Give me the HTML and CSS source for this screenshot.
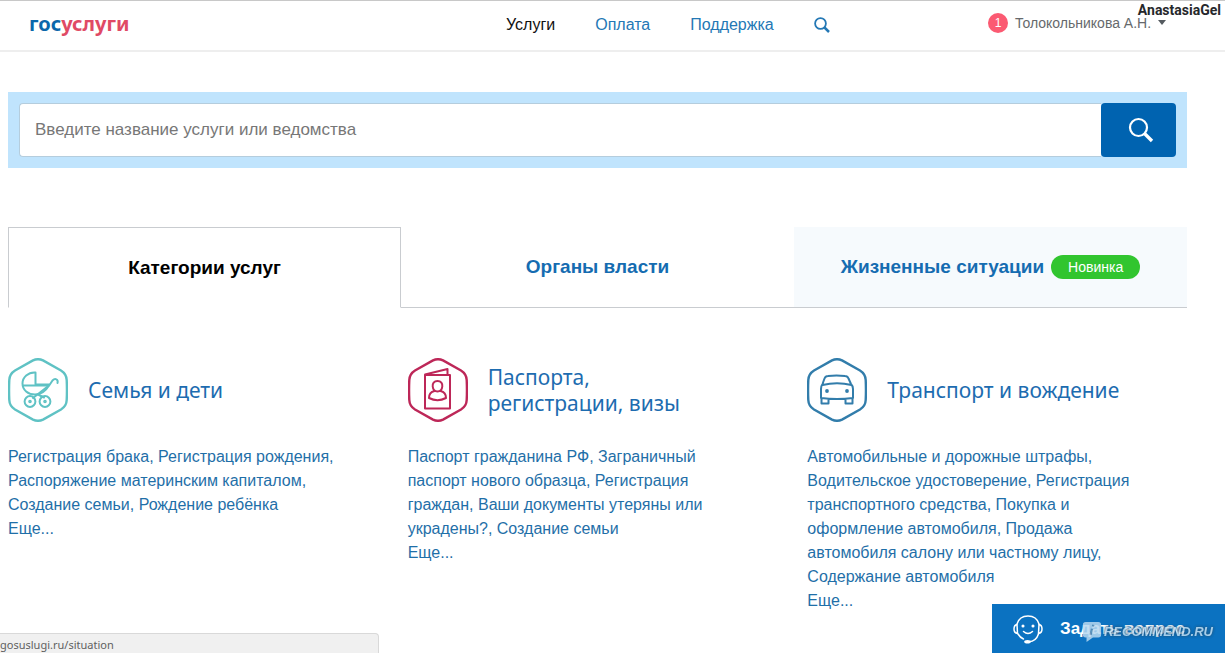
FILE: index.html
```html
<!DOCTYPE html>
<html lang="ru">
<head>
<meta charset="utf-8">
<meta name="viewport" content="width=device-width, initial-scale=1">
<title>Госуслуги</title>
<link rel="stylesheet" href="styles.css">
</head>
<body>
<header class="header">
  <a class="logo" href="#"><span class="logo-blue">гос</span><span class="logo-red">услуги</span></a>
  <nav class="nav">
    <a class="nav-link nav-link-active" href="#">Услуги</a>
    <a class="nav-link" href="#">Оплата</a>
    <a class="nav-link" href="#">Поддержка</a>
    <a class="nav-link nav-search" href="#" aria-label="Поиск">
      <svg width="16" height="16" viewBox="0 0 16 16" fill="none" stroke="currentColor"><circle cx="6.500" cy="6.500" r="5.400" stroke-width="1.800"/><path d="M10.500 10.500L15 15" stroke-width="2.500"/></svg>
    </a>
  </nav>
  <div class="user">
    <span class="count">1</span>
    <button class="user-name" type="button">Толокольникова А.Н.
      <svg width="8" height="5" viewBox="0 0 8 5"><path d="M0 0H8L4 5Z" fill="#555b60"/></svg>
    </button>
  </div>
</header>
<span class="author">AnastasiaGel</span>

<main class="main">
  <form class="search">
    <input class="search-input" type="text" aria-label="Поиск услуги" placeholder="Введите название услуги или ведомства">
    <button class="search-button" type="button" aria-label="Найти">
      <svg width="26" height="26" viewBox="0 0 26 26" fill="none" stroke="#fff"><circle cx="10.500" cy="10.500" r="8.500" stroke-width="2.200"/><path d="M16.500 16.500L24 24" stroke-width="3.400"/></svg>
    </button>
  </form>

  <nav class="tabs">
    <a class="tab tab-active" href="#">Категории услуг</a>
    <a class="tab" href="#">Органы власти</a>
    <a class="tab tab-tinted" href="#">Жизненные ситуации <span class="badge">Новинка</span></a>
  </nav>

  <div class="categories">
    <section class="category">
      <div class="category-head">
        <svg class="icon icon-teal" width="60" height="64" viewBox="0 0 60 64">
          <path class="hex" d="M25 2.400Q30 0 35 2.400L53 12.500Q58.500 16 58.700 22Q59.200 32 58.700 42Q58.500 48 53 51.500L35 61.600Q30 64 25 61.600L7 51.500Q1.500 48 1.300 42Q.8 32 1.300 22Q1.500 16 7 12.500Z"/>
          <path d="M27.500 26V14.500C20 14 14.500 19.500 14.500 25.500C14.500 32 20 36.500 27 36.500C33.500 36.500 38 32.500 41 27.500H15M27.500 26.500H41"/>
          <path d="M25 40L41.500 27L44.500 22.500C47 20 50.500 21 49.500 25M30 36.500L36 39.500"/>
          <circle cx="22" cy="43.500" r="5.400"/><circle cx="37" cy="43.500" r="5.400"/>
          <circle cx="22" cy="43.500" r=".8"/><circle cx="37" cy="43.500" r=".8"/>
        </svg>
        <h2 class="category-title"><a href="#">Семья и дети</a></h2>
      </div>
      <p class="links"><a href="#">Регистрация брака</a>, <a href="#">Регистрация рождения</a>, <a href="#">Распоряжение материнским капиталом</a>, <a href="#">Создание семьи</a>, <a href="#">Рождение ребёнка</a></p>
      <a class="more" href="#">Еще...</a>
    </section>

    <section class="category">
      <div class="category-head">
        <svg class="icon icon-crimson" width="60" height="64" viewBox="0 0 60 64">
          <path class="hex" d="M25 2.400Q30 0 35 2.400L53 12.500Q58.500 16 58.700 22Q59.200 32 58.700 42Q58.500 48 53 51.500L35 61.600Q30 64 25 61.600L7 51.500Q1.500 48 1.300 42Q.8 32 1.300 22Q1.500 16 7 12.500Z"/>
          <path d="M17 17H42V50.500H17ZM17 16.500L39.500 11V17"/>
          <path d="M29.500 23C26 23 24.300 25.500 24.700 28.500C25 31.500 27 33.500 29.500 33.500C32 33.500 34 31.500 34.300 28.500C34.700 25.500 33 23 29.500 23ZM26.500 33C22.500 34 21 36.500 21 40Q29.500 44.500 38 40C38 36.500 36.500 34 32.500 33"/>
        </svg>
        <h2 class="category-title"><a href="#">Паспорта, регистрации, визы</a></h2>
      </div>
      <p class="links"><a href="#">Паспорт гражданина РФ</a>, <a href="#">Заграничный паспорт нового образца</a>, <a href="#">Регистрация граждан</a>, <a href="#">Ваши документы утеряны или украдены?</a>, <a href="#">Создание семьи</a></p>
      <a class="more" href="#">Еще...</a>
    </section>

    <section class="category">
      <div class="category-head">
        <svg class="icon icon-blue" width="60" height="64" viewBox="0 0 60 64">
          <path class="hex" d="M25 2.400Q30 0 35 2.400L53 12.500Q58.500 16 58.700 22Q59.200 32 58.700 42Q58.500 48 53 51.500L35 61.600Q30 64 25 61.600L7 51.500Q1.500 48 1.300 42Q.8 32 1.300 22Q1.500 16 7 12.500Z"/>
          <path d="M14 40V31Q14 28 15.500 26L17.500 20.500Q18.500 18 21 18Q29.500 17 38 18Q40.500 18 41.500 20.500L44 26Q46 28 46 31V40Q30 42 14 40ZM15.500 27Q30 23.500 44.500 27M14.500 40V45.500H21.500V41M38.500 41V45.500H45.500V40"/>
          <circle class="dot" cx="20" cy="33" r="1.900"/><circle class="dot" cx="40" cy="33" r="1.900"/>
        </svg>
        <h2 class="category-title"><a href="#">Транспорт и вождение</a></h2>
      </div>
      <p class="links"><a href="#">Автомобильные и дорожные штрафы</a>, <a href="#">Водительское удостоверение</a>, <a href="#">Регистрация транспортного средства</a>, <a href="#">Покупка и оформление автомобиля</a>, <a href="#">Продажа автомобиля салону или частному лицу</a>, <a href="#">Содержание автомобиля</a></p>
      <a class="more" href="#">Еще...</a>
    </section>
  </div>
</main>

<div class="status">gosuslugi.ru/situation</div>

<button class="ask" type="button">
  <svg width="30" height="30" viewBox="0 0 30 30" fill="none" stroke="#fff" stroke-width="1.500" stroke-linecap="round">
    <path d="M4 10C5.500 5 9.500 2 15 2S24.500 5 26 10M5 20C6.500 22.500 8 24 10.500 25M25.500 20C24 24.500 20.500 27.500 16 27.800"/>
    <path d="M4 10.500Q1 11 1 15T4.500 19.500ZM26 10.500Q29 11 29 15T25.500 19.500ZM10.500 17.500Q15 21.500 19.500 17.500"/>
    <ellipse cx="14.500" cy="27.800" rx="2.600" ry="1" fill="#fff"/>
    <circle cx="10" cy="12" r=".8" fill="#fff"/><circle cx="20" cy="12" r=".8" fill="#fff"/>
  </svg>
  <span>Задать вопрос</span>
</button>
<div class="watermark">
  <svg width="20" height="22" viewBox="0 0 22 22"><path d="M4 0H18Q21 0 21 3V14Q21 17 18 17H12L5 22V17H4Q1 17 1 14V3Q1 0 4 0Z" fill="#b9d9ef"/><path d="M12.500 3L12 5M11 7.500L9.500 14" stroke="#5f8fb4" stroke-width="2.500"/></svg>
  <span>RECOMMEND.RU</span>
</div>
</body>
</html>
```
FILE: styles.css
```css
* { box-sizing: border-box; }
body {
  margin: 0;
  min-height: 100vh;
  overflow: hidden;
  background: #fff;
  color: #1f6fa8;
  font: 16px/24px "Liberation Sans", Arial, sans-serif;
}
a { color: inherit; text-decoration: none; }
button { border: 0; padding: 0; background: none; font: inherit; cursor: pointer; }
svg { display: block; flex: none; }

.header {
  display: grid;
  grid-template-columns: 477fr 482fr 237fr;
  align-items: center;
  height: 52px;
  padding-left: 29px;
  border-top: 1px solid #c8c8c8;
  border-bottom: 2px solid #eee;
}
.logo { font: bold 20px/28px "Noto Sans", sans-serif; padding-bottom: 4px; }
.logo-blue { color: #0b67ab; }
.logo-red { color: #e04a65; }
.nav { display: flex; align-items: center; gap: 40px; padding-bottom: 2px; }
.nav-link { color: #2478b5; }
.nav-link-active { color: #111; }
.user { display: flex; align-items: center; gap: 7px; padding-bottom: 6px; }
.count {
  width: 20px;
  border-radius: 50%;
  background: #fb5a72;
  color: #fff;
  font: 12px/20px "Liberation Sans", Arial, sans-serif;
  text-align: center;
}
.user-name {
  display: flex;
  align-items: center;
  gap: 7px;
  color: #66696c;
  font-size: 14px;
  line-height: 20px;
}
.author {
  position: absolute;
  top: 1px;
  right: 4px;
  color: #26282b;
  font: bold 14px/18px Roboto, sans-serif;
}

.main { padding: 40px 38px 0 8px; }
.search { display: flex; padding: 11px; background: #c0e4fd; }
.search-input {
  flex: 1;
  min-width: 0;
  height: 54px;
  padding: 0 15px;
  border: 1px solid #b5cddd;
  border-right: 0;
  border-radius: 4px 0 0 4px;
  background: #fff;
  color: #333;
  font: 17px/24px "Liberation Sans", Arial, sans-serif;
}
.search-input::placeholder { color: #777; opacity: 1; }
.search-button {
  display: flex;
  align-items: center;
  justify-content: center;
  width: 75px;
  padding-left: 4px;
  border-radius: 4px;
  background: #0063b0;
}

.tabs { display: grid; grid-template-columns: repeat(3, 1fr); margin-top: 59px; }
.tab {
  display: flex;
  align-items: center;
  justify-content: center;
  gap: 7px;
  height: 81px;
  border-bottom: 1px solid #c9ccd0;
  color: #156cb1;
  font-size: 19px;
  font-weight: bold;
}
.tab-active { border: 1px solid #c9ccd0; border-bottom-color: transparent; color: #000; }
.tab-tinted { background: #f6fafd; }
.badge {
  padding: 0 17px;
  border-radius: 12px;
  background: #31c52f;
  color: #fff;
  font-size: 14px;
  font-weight: normal;
}

.categories { display: grid; grid-template-columns: repeat(3, 1fr); gap: 20px; margin-top: 50px; }
.category { padding-right: 40px; }
.category-head { display: flex; align-items: center; gap: 20px; height: 64px; }
.category-title {
  max-width: 240px;
  margin: 0;
  color: #1d6cb0;
  font: 21px/26px "Noto Sans", sans-serif;
}
.icon { fill: none; stroke: currentColor; stroke-width: 2; stroke-linejoin: round; stroke-linecap: round; }
.hex { stroke-width: 2.4; }
.dot { fill: currentColor; stroke: none; }
.icon-teal { color: #5fc2c4; }
.icon-crimson { color: #bd2758; }
.icon-blue { color: #327dab; }
.links { margin: 23px 0 0; }

.status {
  position: fixed;
  bottom: 0;
  left: 0;
  width: 379px;
  height: 20px;
  border: 1px solid #d9d9d9;
  border-width: 1px 1px 0 0;
  border-top-right-radius: 4px;
  background: #f0f0f0;
  color: #606060;
  font: 11px/22px "Noto Sans", sans-serif;
}
.ask {
  position: fixed;
  right: 0;
  bottom: 0;
  display: flex;
  align-items: center;
  gap: 17px;
  width: 233px;
  height: 49px;
  padding-left: 21px;
  background: #0b72c1;
  color: #fff;
  font-size: 17px;
  font-weight: bold;
}
.watermark {
  position: fixed;
  right: 12px;
  bottom: 9px;
  display: flex;
  align-items: center;
  gap: 2px;
  opacity: .85;
  color: #c4dff1;
  font: italic bold 13px/24px "Liberation Sans", Arial, sans-serif;
  text-shadow: 0 0 3px #24567c, 0 0 3px #24567c;
  pointer-events: none;
}
```
